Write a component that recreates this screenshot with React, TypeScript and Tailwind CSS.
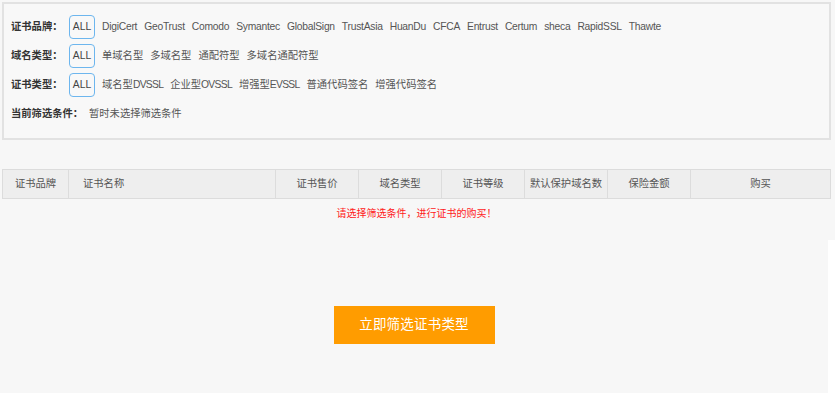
import React from "react";

const brands = ["DigiCert","GeoTrust","Comodo","Symantec","GlobalSign","TrustAsia","HuanDu","CFCA","Entrust","Certum","sheca","RapidSSL","Thawte"];
const domainTypes = ["单域名型","多域名型","通配符型","多域名通配符型"];
const certTypes: [string, string][] = [["域名型","DVSSL"],["企业型","OVSSL"],["增强型","EVSSL"],["普通代码签名",""],["增强代码签名",""]];

function Label({ children, w }: { children: React.ReactNode; w: string }) {
  return <div className={`${w} font-bold text-[#333]`}>{children}</div>;
}

function AllBox() {
  return (
    <span className="h-[24px] w-[26px] flex items-center justify-center border border-[#6db6ee] rounded-[4px] text-[#444]">ALL</span>
  );
}

const cols: { t: string; w: string; align?: string }[] = [
  { t: "证书品牌", w: "w-[66px]" },
  { t: "证书名称", w: "w-[207px]", align: "left" },
  { t: "证书售价", w: "w-[83px]" },
  { t: "域名类型", w: "w-[83px]" },
  { t: "证书等级", w: "w-[83px]" },
  { t: "默认保护域名数", w: "w-[83px]" },
  { t: "保险金额", w: "w-[83px]" },
  { t: "购买", w: "flex-1" },
];

export default function App() {
  return (
    <div
      className="w-[835px] h-[393px] bg-white text-[10.3px] overflow-hidden"
      style={{ fontFamily: '"Liberation Sans", "Noto Sans CJK SC", sans-serif' }}
    >
      <div className="h-[240px] bg-[#f7f7f7] pt-[2px] pl-[2px] pr-[4px]">
        <div className="border-2 border-[#e2e2e2] bg-[#f8f8f8] h-[138px] pl-[7px] pt-[8px]">
          <div className="flex items-center h-[29px]">
            <Label w="w-[58px]">证书品牌：</Label>
            <div className="flex items-center gap-[7px]">
              <AllBox />
              {brands.map((b) => (
                <span key={b} className="text-[#555] tracking-[-0.25px]">{b}</span>
              ))}
            </div>
          </div>
          <div className="flex items-center h-[29px]">
            <Label w="w-[58px]">域名类型：</Label>
            <div className="flex items-center gap-[7px]">
              <AllBox />
              {domainTypes.map((b) => (
                <span key={b} className="text-[#555]">{b}</span>
              ))}
            </div>
          </div>
          <div className="flex items-center h-[29px]">
            <Label w="w-[58px]">证书类型：</Label>
            <div className="flex items-center gap-[7px]">
              <AllBox />
              {certTypes.map(([c, l]) => (
                <span key={c + l} className="text-[#555]">
                  {c}
                  {l && <span className="tracking-[-0.7px]">{l}</span>}
                </span>
              ))}
            </div>
          </div>
          <div className="flex items-center h-[29px]">
            <Label w="w-[78px]">当前筛选条件：</Label>
            <span className="text-[#555]">暂时未选择筛选条件</span>
          </div>
        </div>
        <div className="mt-[29px] flex h-[30px] border border-[#dcdcdc] bg-[#eeeeee] text-[#555]">
          {cols.map((c, i) => (
            <div
              key={c.t}
              className={`${c.w} flex items-center ${c.align === "left" ? "justify-start pl-[14px]" : "justify-center"} ${i < cols.length - 1 ? "border-r border-[#dcdcdc]" : ""}`}
            >
              {c.t}
            </div>
          ))}
        </div>
        <div className="text-center text-[#ff1a1a] text-[10px] mt-[7px]">请选择筛选条件，进行证书的购买！</div>
      </div>
      <div className="w-[828px] h-[153px] bg-[#f7f7f7] pt-[66px] flex justify-center items-start">
        <button className="w-[161px] h-[38px] bg-[#ff9c00] text-white text-[13.5px] tracking-[0.2px]">立即筛选证书类型</button>
      </div>
    </div>
  );
}
